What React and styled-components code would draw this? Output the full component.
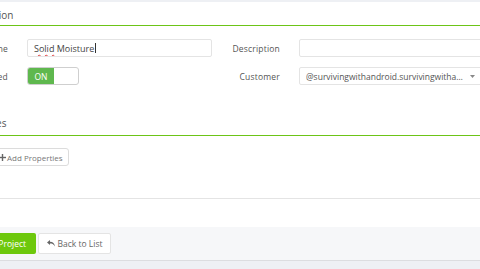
import React from "react";
import styled, { createGlobalStyle } from "styled-components";

const Global = createGlobalStyle`
  html, body { margin: 0; padding: 0; }
  body {
    background: #eef0f4;
    font-family: "Open Sans", "Liberation Sans", sans-serif;
    color: #555;
    overflow: hidden;
    width: 480px;
    height: 269px;
  }
  * { box-sizing: border-box; }
`;

const Page = styled.div`
  margin-left: -60px;
  padding-top: 2px;
  width: 620px;
`;

const Card = styled.div`
  background: #fff;
`;

const SectionHeader = styled.div`
  height: ${(p) => p.$h}px;
  padding-left: 18px;
  padding-top: ${(p) => p.$pt || 0}px;
  display: flex;
  align-items: center;
  font-size: 10px;
  color: #555;
  border-bottom: 1px solid #6cc417;
`;

const FormBody = styled.div`
  padding: 13px 0 0 0;
  display: grid;
  grid-template-columns: 272px 272px;
  row-gap: 10px;
`;

const Field = styled.div`
  display: grid;
  grid-template-columns: 68px 185px;
  column-gap: 19px;
  align-items: center;
`;

const Label = styled.label`
  text-align: right;
  font-size: 8.5px;
  color: #555;
  letter-spacing: 0.2px;
  white-space: nowrap;
`;

const Input = styled.div`
  height: 18px;
  border: 1px solid #e4e4e4;
  border-radius: 2px;
  padding: 0 6px;
  display: flex;
  align-items: center;
  font-size: 9px;
  color: #444;
  white-space: nowrap;
  overflow: hidden;
`;

const Spell = styled.span`
  text-decoration: underline wavy #e04040;
  text-decoration-thickness: 1px;
  text-underline-offset: 2px;
`;

const Caret = styled.span`
  display: inline-block;
  width: 1px;
  height: 10px;
  background: #333;
  margin-left: 1px;
`;

const Toggle = styled.div`
  width: 52px;
  height: 18px;
  border: 1px solid #cfcfcf;
  border-radius: 3px;
  display: flex;
  overflow: hidden;
`;

const ToggleOn = styled.div`
  width: 26px;
  background: #5fb84e;
  color: #fff;
  font-size: 8.5px;
  display: flex;
  align-items: center;
  justify-content: center;
`;

const Select = styled(Input)`
  padding-right: 8px;
`;

const SelectText = styled.span`
  min-width: 0;
  flex: 1;
  overflow: hidden;
  text-overflow: ellipsis;
  color: #555;
  font-size: 8.5px;
`;

const SelectArrow = styled.svg`
  flex: none;
  margin-left: 5px;
`;

const PropsSection = styled.div`
  margin-top: 26px;
`;

const PropsBody = styled.div`
  padding: 12px 0 32px 54px;
  border-bottom: 1px solid #e4e4e4;
  display: flex;
`;

const GhostButton = styled.button`
  height: 18px;
  border: 1px solid #dcdcdc;
  border-radius: 3px;
  background: #fff;
  font-family: inherit;
  font-size: 8px;
  color: #777;
  padding: 0 5px 0 4px;
  display: inline-flex;
  align-items: center;
  gap: 1px;
  white-space: nowrap;
`;

const Spacer = styled.div`
  height: 28px;
  background: #fff;
`;

const Footer = styled.div`
  background: #f6f7f9;
  border-bottom: 1px solid #dcdde0;
  height: 34px;
  padding: 6px 0 0 22px;
  display: flex;
  gap: 2px;
  align-items: flex-start;
`;

const PrimaryButton = styled.button`
  height: 21px;
  border: none;
  border-radius: 2px;
  background: #6dc80c;
  color: #fff;
  font-family: inherit;
  font-size: 8.5px;
  padding: 0 10px 0 8px;
  white-space: nowrap;
`;

const BackButton = styled.button`
  height: 21px;
  width: 73px;
  border: 1px solid #e4e4e4;
  border-radius: 2px;
  background: #fff;
  color: #666;
  font-family: inherit;
  font-size: 8.5px;
  display: inline-flex;
  align-items: center;
  justify-content: center;
  gap: 3px;
  padding: 0;
  white-space: nowrap;
`;

const ReplyIcon = () => (
  <svg width="8" height="7" viewBox="0 0 16 14" fill="#666">
    <path d="M6 0 L0 5 L6 10 L6 7 C10 7 13 8 16 13 C15 7 12 3.5 6 3.5 Z" />
  </svg>
);

const PlusIcon = () => (
  <svg width="7" height="7" viewBox="0 0 10 10" fill="#666">
    <rect x="4" y="0" width="2" height="10" />
    <rect x="0" y="4" width="10" height="2" />
  </svg>
);

export default function App() {
  return (
    <>
      <Global />
      <Page>
        <Card>
          <SectionHeader $h={24} $pt={2}>Information</SectionHeader>
          <FormBody>
            <Field>
              <Label>Name</Label>
              <Input>
                <Spell>Solid</Spell>&nbsp;Moisture<Caret />
              </Input>
            </Field>
            <Field>
              <Label>Description</Label>
              <Input />
            </Field>
            <Field>
              <Label>Enabled</Label>
              <Toggle>
                <ToggleOn>ON</ToggleOn>
              </Toggle>
            </Field>
            <Field>
              <Label>Customer</Label>
              <Select>
                <SelectText>@survivingwithandroid.survivingwithandroid</SelectText>
                <SelectArrow width="5" height="3" viewBox="0 0 5 3">
                  <path d="M0 0 L5 0 L2.5 3 Z" fill="#888" />
                </SelectArrow>
              </Select>
            </Field>
          </FormBody>
          <PropsSection>
            <SectionHeader $h={25}>Properties</SectionHeader>
            <PropsBody>
              <GhostButton>
                <PlusIcon /> Add Properties
              </GhostButton>
            </PropsBody>
          </PropsSection>
          <Spacer />
        </Card>
        <Footer>
          <PrimaryButton>Create Project</PrimaryButton>
          <BackButton>
            <ReplyIcon /> Back to List
          </BackButton>
        </Footer>
      </Page>
    </>
  );
}
